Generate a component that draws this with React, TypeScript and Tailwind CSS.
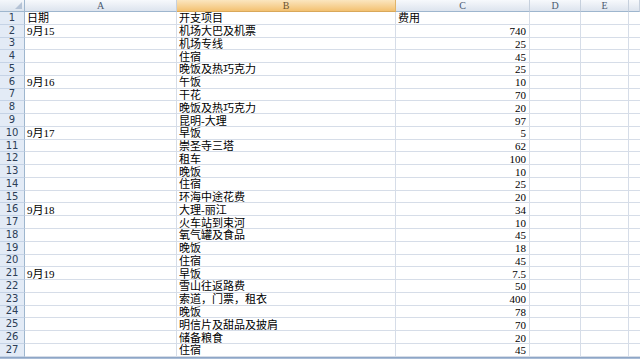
import React from "react";

const rows: [string, string, string][] = [
  ["日期", "开支项目", "费用"],
  ["9月15", "机场大巴及机票", "740"],
  ["", "机场专线", "25"],
  ["", "住宿", "45"],
  ["", "晚饭及热巧克力", "25"],
  ["9月16", "午饭", "10"],
  ["", "干花", "70"],
  ["", "晚饭及热巧克力", "20"],
  ["", "昆明-大理", "97"],
  ["9月17", "早饭", "5"],
  ["", "崇圣寺三塔", "62"],
  ["", "租车", "100"],
  ["", "晚饭", "10"],
  ["", "住宿", "25"],
  ["", "环海中途花费", "20"],
  ["9月18", "大理-丽江", "34"],
  ["", "火车站到束河", "10"],
  ["", "氧气罐及食品", "45"],
  ["", "晚饭", "18"],
  ["", "住宿", "45"],
  ["9月19", "早饭", "7.5"],
  ["", "雪山往返路费", "50"],
  ["", "索道，门票，租衣", "400"],
  ["", "晚饭", "78"],
  ["", "明信片及甜品及披肩", "70"],
  ["", "储备粮食", "20"],
  ["", "住宿", "45"],
];

const cjk = { fontFamily: '"Liberation Serif", "Noto Sans CJK SC", serif' };
const num = { fontFamily: '"Liberation Serif", serif' };

function ColHead({ label, sel }: { label: string; sel?: boolean }) {
  return (
    <div
      className={
        "flex items-center justify-center border-r border-b text-[10px] leading-none " +
        (sel
          ? "bg-gradient-to-b from-[#fbe6bf] to-[#f3c170] border-r-[#e0b46a] border-b-[#d9a85a] text-[#6b5230]"
          : "bg-gradient-to-b from-[#f7f9fc] to-[#dde4ee] border-r-[#c6d0dd] border-b-[#9eb6ce] text-[#4a5a70]")
      }
      style={num}
    >
      {label}
    </div>
  );
}

export default function App() {
  return (
    <div className="w-[640px] h-[359px] overflow-hidden bg-white flex flex-col">
      <div
        className="grid flex-none"
        style={{
          gridTemplateColumns: "25px 152px 219px 134px 51px 48px 11px",
          gridTemplateRows: "12px repeat(27, 12.78px)",
        }}
      >
        <div className="relative bg-gradient-to-b from-[#f4f7fb] to-[#dce4ee] border-r border-b border-r-[#9eb6ce] border-b-[#9eb6ce]">
          <div className="absolute right-[2px] bottom-[2px] w-0 h-0 border-l-[7px] border-l-transparent border-b-[7px] border-b-[#b5c3d6]" />
        </div>
        <ColHead label="A" />
        <ColHead label="B" sel />
        <ColHead label="C" />
        <ColHead label="D" />
        <ColHead label="E" />
        <ColHead label="" />
        {rows.map((r, i) => (
          <React.Fragment key={i}>
            <div
              className="flex items-center justify-center bg-[#e3ebf6] border-r border-b border-r-[#9eb6ce] border-b-[#c5d3e6] leading-none text-[#2c3e57]"
              style={{ fontFamily: '"DejaVu Sans", sans-serif', fontSize: "10px" }}
            >
              {i + 1}
            </div>
            <div
              className="flex items-center pt-[1px] pl-[2px] border-r border-b border-[#d6dde8] text-[11px] leading-[12px] text-black whitespace-nowrap"
              style={cjk}
            >
              {r[0]}
            </div>
            <div
              className="flex items-center pt-[1px] pl-[2px] border-r border-b border-[#d6dde8] text-[11px] leading-[12px] text-black whitespace-nowrap"
              style={cjk}
            >
              {r[1]}
            </div>
            <div
              className={
                "flex items-center pt-[1px] border-r border-b border-[#d6dde8] text-[11px] leading-[12px] text-black whitespace-nowrap " +
                (i === 0 ? "justify-start pl-[2px]" : "justify-end pr-[3px]")
              }
              style={i === 0 ? cjk : num}
            >
              {r[2]}
            </div>
            <div className="border-r border-b border-[#d6dde8]" />
            <div className="border-r border-b border-[#d6dde8]" />
            <div className="border-b border-[#d6dde8]" />
          </React.Fragment>
        ))}
      </div>
      <div className="flex-1 bg-[#a9bcd6] border-t border-[#8ea6c6]" />
    </div>
  );
}
